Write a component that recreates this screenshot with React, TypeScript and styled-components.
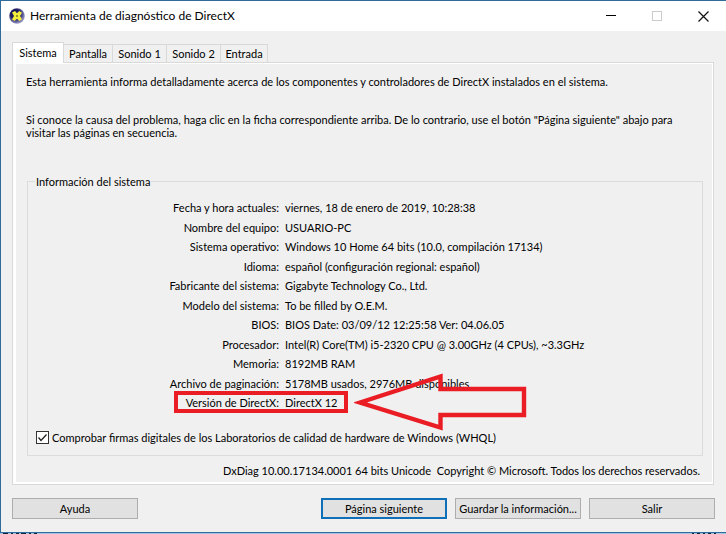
import React, { useState } from "react";
import styled, { createGlobalStyle } from "styled-components";

const GlobalStyle = createGlobalStyle`
  * { box-sizing: border-box; }
  body { margin: 0; background: #a3c4e2; }
  button, input { font: inherit; color: inherit; margin: 0; }
`;

const Desktop = styled.div`
  min-height: 100vh;
  display: flex;
  flex-direction: column;
  background: #a3c4e2;
  font: 11px/15px Lato, "DejaVu Sans Condensed", sans-serif;
  color: #000;
`;

const DesktopEdge = styled.div`
  display: flex;
  justify-content: space-between;
  height: 1px;
  padding: 0 8px 0 3px;
  svg { display: block; }
`;

const Window = styled.main`
  flex: 1;
  display: flex;
  flex-direction: column;
  background: #f0f0f0;
  border: 1px solid #2f6c9c;
  border-right: 0;
`;

const TitleBar = styled.header`
  display: flex;
  align-items: center;
  height: 30px;
  padding-left: 8px;
  background: #fff;
`;

const Title = styled.h1`
  flex: 1;
  margin: 0 0 0 5px;
  font-weight: 400;
  font-size: 12px;
  line-height: 18px;
`;

const CaptionButton = styled.button`
  width: 46px;
  height: 30px;
  padding: 0;
  border: 0;
  background: none;
  display: grid;
  place-items: center;
`;

const Body = styled.div`
  flex: 1;
  display: flex;
  flex-direction: column;
  padding: 11px 11px 13px;
`;

const TabList = styled.div`
  display: flex;
  align-items: flex-end;
  height: 20px;
`;

const Tab = styled.button<{ $selected: boolean; $width: number }>`
  position: relative;
  z-index: ${(p) => (p.$selected ? 1 : 0)};
  width: ${(p) => p.$width}px;
  height: ${(p) => (p.$selected ? 21 : 18)}px;
  margin-bottom: ${(p) => (p.$selected ? -1 : 0)}px;
  padding: ${(p) => (p.$selected ? "0 0 2px" : "0")};
  border: 1px solid #d9d9d9;
  border-bottom: 0;
  border-left-width: ${(p) => (p.$selected ? 1 : 0)}px;
  background: ${(p) => (p.$selected ? "#fff" : "#f0f0f0")};
  white-space: nowrap;
`;

const Panel = styled.section`
  flex: 1;
  display: flex;
  flex-direction: column;
  margin-right: 1px;
  padding: 11px 8px 4px 11px;
  border: 1px solid #d9d9d9;
  box-shadow: inset 3px 0 #fff, inset -1px 0 #fff, inset 0 1px #fff, inset 0 -2px #fff;
`;

const Intro = styled.p`
  margin: 0 0 24px 2px;
  line-height: 15px;
`;

const Hint = styled.p`
  margin: 0 24px 35px 2px;
  line-height: 13px;
`;

const Group = styled.fieldset`
  min-width: 0;
  margin: 0 2px 0 3px;
  padding: 9px 8px 10px;
  border: 1px solid #dcdcdc;
`;

const Legend = styled.legend`
  margin-left: -1px;
  padding: 0 1px;
`;

const InfoTable = styled.table`
  width: 100%;
  border-collapse: collapse;
  table-layout: fixed;
`;

const InfoRow = styled.tr`
  height: 19px;
  &:nth-child(even) { height: 20px; }
`;

const InfoLabel = styled.th`
  width: 243px;
  padding: 0;
  font-weight: 400;
  text-align: right;
  white-space: nowrap;
`;

const InfoValue = styled.td`
  position: relative;
  padding: 0 0 0 6px;
  white-space: nowrap;
`;

const Highlight = styled.span`
  position: absolute;
  left: -105px;
  top: -2px;
  width: 174px;
  height: 22px;
  border: 4px solid #ea1c24;
  pointer-events: none;
`;

const Arrow = styled.svg`
  position: absolute;
  left: 75px;
  top: -21px;
  pointer-events: none;
`;

const CheckLabel = styled.label`
  display: flex;
  align-items: center;
  gap: 3px;
  margin-top: 18px;
  line-height: 15px;
`;

const CheckMark = styled.span`
  display: grid;
  width: 13px;
  height: 13px;
  & > * { grid-area: 1 / 1; }
  svg { pointer-events: none; }
`;

const CheckBox = styled.input`
  appearance: none;
  width: 13px;
  height: 13px;
  border: 1px solid #333;
  background: #fff;
  &:not(:checked) + svg { visibility: hidden; }
`;

const Version = styled.p`
  margin: 7px 5px 0 0;
  text-align: right;
  white-space: pre;
`;

const Actions = styled.footer`
  display: flex;
  gap: 8px;
  margin-top: 13px;
`;

const ActionButton = styled.button<{ $primary?: boolean }>`
  width: 126px;
  height: 21px;
  padding: 0;
  border: ${(p) => (p.$primary ? "2px solid #0f6fb8" : "1px solid #adadad")};
  background: #e1e1e1;
  white-space: nowrap;
  &:first-child { margin-right: auto; }
`;

const tabs = [
  { name: "Sistema", width: 52 },
  { name: "Pantalla", width: 49 },
  { name: "Sonido 1", width: 54 },
  { name: "Sonido 2", width: 54 },
  { name: "Entrada", width: 47 },
];

const info = [
  ["Fecha y hora actuales:", "viernes, 18 de enero de 2019, 10:28:38"],
  ["Nombre del equipo:", "USUARIO-PC"],
  ["Sistema operativo:", "Windows 10 Home 64 bits (10.0, compilación 17134)"],
  ["Idioma:", "español (configuración regional: español)"],
  ["Fabricante del sistema:", "Gigabyte Technology Co., Ltd."],
  ["Modelo del sistema:", "To be filled by O.E.M."],
  ["BIOS:", "BIOS Date: 03/09/12 12:25:58 Ver: 04.06.05"],
  ["Procesador:", "Intel(R) Core(TM) i5-2320 CPU @ 3.00GHz (4 CPUs), ~3.3GHz"],
  ["Memoria:", "8192MB RAM"],
  ["Archivo de paginación:", "5178MB usados, 2976MB disponibles"],
  ["Versión de DirectX:", "DirectX 12"],
];

const DirectXIcon = () => (
  <svg width="16" height="16" viewBox="0 0 16 16" aria-hidden="true">
    <defs>
      <radialGradient id="ball" cx="40%" cy="38%" r="66%">
        <stop offset="0.45" stopColor="#1c1c5c" />
        <stop offset="1" stopColor="#a9a9d8" />
      </radialGradient>
    </defs>
    <circle cx="8" cy="8" r="7.8" fill="url(#ball)" />
    <path d="M3 4.6 6 3 8 5.2 10.2 3 13 4.8 11 8 13 11.2 10.4 13 8 10.8 5.4 13 3 11.2 5 8Z" fill="#f4ee3c" />
    <circle cx="8" cy="8" r="1" fill="#77751f" />
  </svg>
);

export default function App() {
  const [selected, setSelected] = useState("Sistema");
  return (
    <Desktop>
      <GlobalStyle />
      <Window>
        <TitleBar>
          <DirectXIcon />
          <Title>Herramienta de diagnóstico de DirectX</Title>
          <CaptionButton aria-label="Minimizar">
            <svg width="10" height="10"><path d="M0 4.5H10" stroke="#000" /></svg>
          </CaptionButton>
          <CaptionButton aria-label="Maximizar" disabled>
            <svg width="10" height="10"><rect x=".5" y=".5" width="9" height="9" fill="none" stroke="#ccc" /></svg>
          </CaptionButton>
          <CaptionButton aria-label="Cerrar">
            <svg width="11" height="11"><path d="M.5.5 10.5 10.5M10.5.5.5 10.5" stroke="#111" strokeWidth="1.2" /></svg>
          </CaptionButton>
        </TitleBar>
        <Body>
          <TabList role="tablist">
            {tabs.map((t) => (
              <Tab
                key={t.name}
                role="tab"
                aria-selected={t.name === selected}
                $selected={t.name === selected}
                $width={t.width}
                onClick={() => setSelected(t.name)}
              >
                {t.name}
              </Tab>
            ))}
          </TabList>
          <Panel role="tabpanel">
            <Intro>
              Esta herramienta informa detalladamente acerca de los componentes y controladores de DirectX instalados en el sistema.
            </Intro>
            <Hint>
              Si conoce la causa del problema, haga clic en la ficha correspondiente arriba. De lo contrario, use el botón "Página siguiente" abajo para visitar las páginas en secuencia.
            </Hint>
            <Group>
              <Legend>Información del sistema</Legend>
              <InfoTable>
                <tbody>
                  {info.map(([label, value], i) => (
                    <InfoRow key={label}>
                      <InfoLabel scope="row">{label}</InfoLabel>
                      <InfoValue>
                        {value}
                        {i === info.length - 1 && (
                          <>
                            <Highlight />
                            <Arrow width="174" height="60" viewBox="0 0 174 60" aria-hidden="true">
                              <path d="M6 30.5 86.5 4.5V17H170V43H86.5V55.5Z" fill="none" stroke="#ea1c24" strokeWidth="4.4" />
                            </Arrow>
                          </>
                        )}
                      </InfoValue>
                    </InfoRow>
                  ))}
                </tbody>
              </InfoTable>
              <CheckLabel>
                <CheckMark>
                  <CheckBox type="checkbox" defaultChecked />
                  <svg width="13" height="13"><path d="M2.5 6.5 5 9.5 10.5 3.5" fill="none" stroke="#222" strokeWidth="1.3" /></svg>
                </CheckMark>
                Comprobar firmas digitales de los Laboratorios de calidad de hardware de Windows (WHQL)
              </CheckLabel>
            </Group>
            <Version>{"DxDiag 10.00.17134.0001 64 bits Unicode  Copyright © Microsoft. Todos los derechos reservados."}</Version>
          </Panel>
          <Actions>
            <ActionButton>Ayuda</ActionButton>
            <ActionButton $primary>Página siguiente</ActionButton>
            <ActionButton>Guardar la información...</ActionButton>
            <ActionButton>Salir</ActionButton>
          </Actions>
        </Body>
      </Window>
      <DesktopEdge aria-hidden="true">
        <svg width="34" height="1"><path d="M0 .5H34" stroke="#12263a" strokeDasharray="5 3 2 3 3 2" /></svg>
        <svg width="26" height="1"><path d="M0 .5H26" stroke="#12263a" strokeDasharray="2 3 3 3" /></svg>
      </DesktopEdge>
    </Desktop>
  );
}
